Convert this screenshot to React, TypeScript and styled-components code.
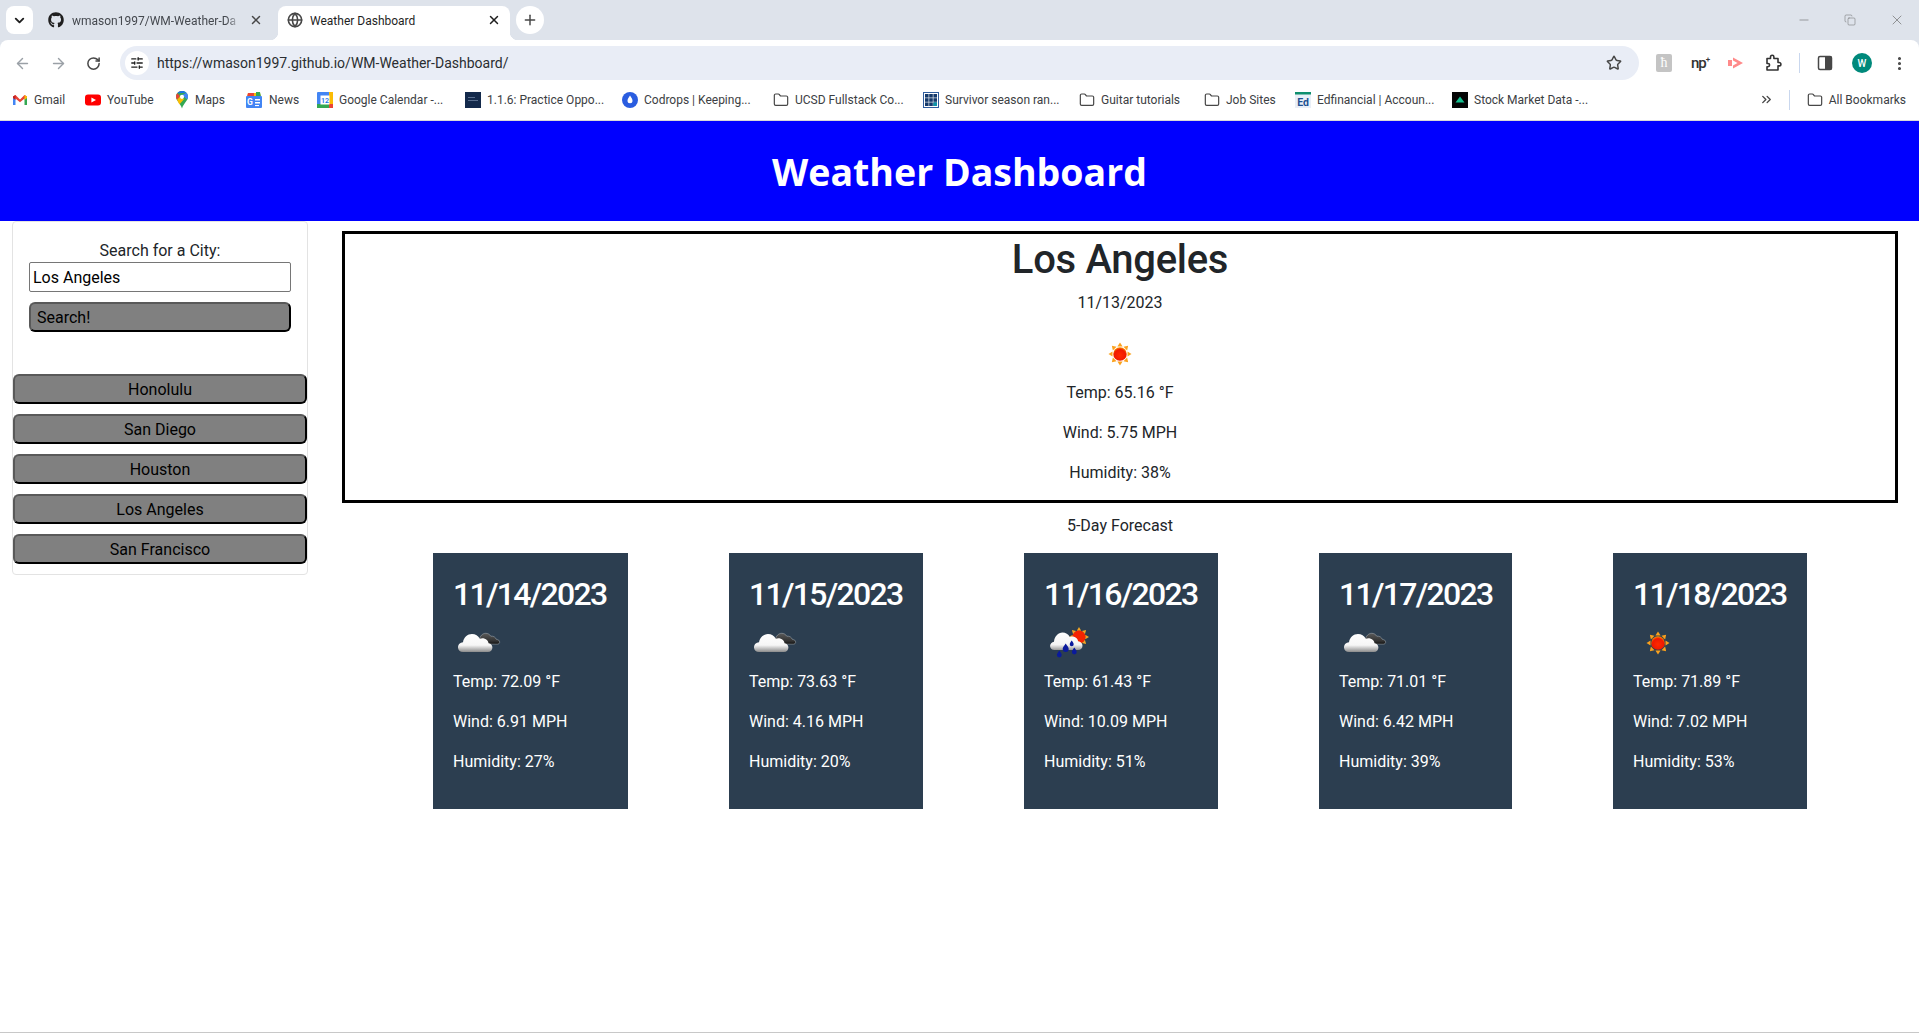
import React from 'react'
import styled, { createGlobalStyle } from 'styled-components'
import { FaGithub } from 'react-icons/fa'
import {
    ArrowLeft,
    ArrowRight,
    ChevronDown,
    ChevronsRight,
    EllipsisVertical,
    Folder,
    Globe,
    Plus,
    RotateCw,
    SlidersHorizontal,
    Star,
    X,
    Minus,
    Copy,
} from 'lucide-react'

const GlobalStyle = createGlobalStyle`
    * { box-sizing: border-box; }
    html, body { margin: 0; padding: 0; background: #fff; }
    body {
        font-family: Roboto, "Open Sans", sans-serif;
        color: #212529;
        overflow: hidden;
    }
`

const SunIcon = () => (
    <svg width="50" height="50" viewBox="0 0 50 50">
        <defs>
            <radialGradient id="sunCore" cx="50%" cy="60%" r="60%">
                <stop offset="0%" stopColor="#ff2a00" />
                <stop offset="70%" stopColor="#f01800" />
                <stop offset="100%" stopColor="#ff9a00" />
            </radialGradient>
        </defs>
        <g fill="#fba11c">
            {[0, 45, 90, 135, 180, 225, 270, 315].map((deg) => (
                <polygon key={deg} points="25,13.5 27.6,17.5 22.4,17.5" transform={`rotate(${deg} 25 25)`} />
            ))}
        </g>
        <circle cx="25" cy="25" r="6.8" fill="url(#sunCore)" />
    </svg>
)

const CloudShape = ({ fill }: { fill: string }) => (
    <path
        d="M5 29.5c0-3 2.2-5 5-5.2.6-4.8 4.6-8.3 9-8.3 3.4 0 6.3 1.9 7.8 4.8 1.1-.6 2.4-.8 3.6-.6 3 .5 4.800 2.600 5.200 5 2.400.4 3.800 2.200 3.800 4.300 0 2.600-1.800 4.500-4.500 4.500H10c-3 0-5-2-5-4.500z"
        fill={fill}
    />
)

const CloudsIcon = ({ id }: { id: string }) => (
    <svg width="50" height="50" viewBox="0 0 50 50">
        <defs>
            <linearGradient id={`${id}White`} x1="0" y1="0" x2="0" y2="1">
                <stop offset="0%" stopColor="#ffffff" />
                <stop offset="62%" stopColor="#f6f6f6" />
                <stop offset="100%" stopColor="#8b8b8b" />
            </linearGradient>
            <linearGradient id={`${id}Dark`} x1="0" y1="0" x2="0" y2="1">
                <stop offset="0%" stopColor="#5a5a5a" />
                <stop offset="70%" stopColor="#333333" />
                <stop offset="100%" stopColor="#111111" />
            </linearGradient>
        </defs>
        <path
            d="M27 26c-1.700-.6-2-3-.6-4.200.4-3.600 3.100-6.500 6.300-6.500 2.300 0 4 1.100 5.100 2.900 2.700-.3 4.700 1 5.600 3.200 1.900.2 3.300 1.100 3.300 2.700 0 1.400-1.100 2.100-2.600 2.100z"
            fill={`url(#${id}Dark)`}
            stroke="#a9b0b6"
            strokeWidth=".5"
        />
        <CloudShape fill={`url(#${id}White)`} />
    </svg>
)

const RainIcon = () => (
    <svg width="50" height="50" viewBox="0 0 50 50">
        <defs>
            <linearGradient id="rainCloud" x1="0" y1="0" x2="0" y2="1">
                <stop offset="0%" stopColor="#ffffff" />
                <stop offset="70%" stopColor="#f4f4f4" />
                <stop offset="100%" stopColor="#9a9a9a" />
            </linearGradient>
        </defs>
        <g fill="#f5a623">
            {[0, 45, 90, 135, 180, 225, 270, 315].map((deg) => (
                <polygon key={deg} points="35,9 37.200,12.800 32.800,12.800" transform={`rotate(${deg} 35 19)`} />
            ))}
        </g>
        <circle cx="35" cy="19" r="6.500" fill="#f52400" />
        <path
            d="M6 28.500c0-2.600 1.800-4.400 4-4.800.4-5.200 4.200-9.200 8.500-9.200 3.200 0 5.800 1.700 7.300 4.500 1.100-.5 2.300-.7 3.500-.4 2.800.5 4.400 2.500 4.800 4.700 2.700.4 4.400 2.200 4.400 4.400 0 2.300-1.700 4.300-4.500 4.300H10.500c-2.800 0-4.500-1.900-4.500-4.500z"
            fill="url(#rainCloud)"
        />
        <g fill="#0a1a9c">
            <path d="M15.300 32.500c1.300 2 2.400 3.200 2.400 4.500a2.400 2.400 0 0 1-4.800 0c0-1.300 1.100-2.500 2.400-4.500z" />
            <path d="M21.700 25.500c1.600 2.400 3 3.900 3 5.600a3 3 0 0 1-6 0c0-1.700 1.400-3.200 3-5.600z" />
            <path d="M27.700 22.500c1 1.600 2 2.600 2 3.800a2 2 0 0 1-4 0c0-1.200 1-2.200 2-3.800z" />
            <path d="M30.300 29.500c1.300 2 2.400 3.200 2.400 4.500a2.400 2.400 0 0 1-4.800 0c0-1.300 1.100-2.500 2.400-4.500z" />
        </g>
    </svg>
)

const GmailIcon = () => (
    <svg width="16" height="16" viewBox="0 0 16 16">
        <path d="M1 4v9h2.500V6.500z" fill="#4285f4" />
        <path d="M15 4v9h-2.500V6.500z" fill="#34a853" />
        <path d="M1 4.500 3.500 3 8 7.500 12.500 3 15 4.500 8 10.200z" fill="#ea4335" />
        <path d="M12.500 3 15 4.500V6l-2.500 1.900z" fill="#fbbc04" />
        <path d="M1 4.500 3.500 3v4.900L1 6z" fill="#c5221f" />
    </svg>
)

const YoutubeIcon = () => (
    <svg width="16" height="16" viewBox="0 0 16 16">
        <rect y="2.500" width="16" height="11" rx="3" fill="#f00" />
        <polygon points="6.400,5.500 11,8 6.400,10.500" fill="#fff" />
    </svg>
)

const MapsIcon = () => (
    <svg width="14" height="18" viewBox="0 0 14 18">
        <path d="M7 0C3.400 0 1 2.500 1 5.800 1 9.500 5.300 12.300 7 17.500 8.700 12.300 13 9.500 13 5.800 13 2.500 10.600 0 7 0z" fill="#34a853" />
        <path d="M2.300 2.300 11.500 1.700C10.300.6 8.800 0 7 0 5 0 3.400.8 2.300 2.300z" fill="#1a73e8" />
        <path d="M1 5.800C1 4.200 1.500 3.200 2.300 2.300L5 5 2 8.800C1.400 7.900 1 7 1 5.800z" fill="#ea4335" />
        <path d="M11.500 1.700C12.400 2.700 13 4 13 5.800c0 1-.3 1.800-.8 2.600L7 4z" fill="#4285f4" />
        <path d="M2 8.800 5.500 5l3.500 3.300-4.700 5.100C3.500 11.700 2.600 10 2 8.800z" fill="#fbbc04" />
        <circle cx="7" cy="5.800" r="2.100" fill="#fff" />
    </svg>
)

const NewsIcon = () => (
    <svg width="18" height="18" viewBox="0 0 18 18">
        <path d="M3 2h12l1 4H2z" fill="#fbbc04" />
        <path d="M3 2h6v4H2z" fill="#ea4335" />
        <path d="M11 1h4l1 5h-5z" fill="#34a853" />
        <rect x="1" y="5" width="16" height="12" rx="1" fill="#4285f4" />
        <text x="5" y="14" fontSize="8.500" fontWeight="700" fill="#fff" textAnchor="middle" fontFamily="Roboto">G</text>
        <rect x="10" y="8" width="5" height="1.500" fill="#fff" />
        <rect x="10" y="11" width="5" height="1.500" fill="#fff" />
        <rect x="10" y="14" width="4" height="1.100" fill="#fff" />
    </svg>
)

const CalendarIcon = () => (
    <svg width="16" height="16" viewBox="0 0 16 16">
        <rect width="16" height="16" rx="1" fill="#4285f4" />
        <rect x="12" y="0" width="4" height="12" fill="#fbbc04" />
        <rect x="0" y="12" width="12" height="4" fill="#34a853" />
        <rect x="12" y="12" width="4" height="4" fill="#ea4335" />
        <rect x="3.500" y="3.500" width="9" height="9" fill="#fff" />
        <text x="8" y="11" fontSize="7" fontWeight="600" fill="#1a73e8" textAnchor="middle" fontFamily="Roboto">12</text>
    </svg>
)

const NavyIcon = () => (
    <svg width="16" height="16" viewBox="0 0 16 16">
        <rect width="16" height="16" fill="#13294b" />
        <rect x="3" y="5" width="7" height="1" fill="#5a6f8f" />
        <rect x="3" y="8" width="10" height="1" fill="#5a6f8f" />
    </svg>
)

const CodropsIcon = () => (
    <svg width="16" height="16" viewBox="0 0 16 16">
        <circle cx="8" cy="8" r="8" fill="#2a5de0" />
        <path d="M8 3.600c1.400 2.200 2.500 3.600 2.500 5.200a2.500 2.500 0 0 1-5 0c0-1.600 1.100-3 2.500-5.200z" fill="#fff" />
    </svg>
)

const GridIcon = () => (
    <svg width="16" height="16" viewBox="0 0 16 16">
        <rect width="16" height="16" fill="#2f5d9e" />
        <rect x="1" y="1" width="14" height="14" fill="#fff" />
        <g fill="#163a6b">
            {[2, 6.200, 10.400].map((y) =>
                [2, 6.200, 10.400].map((x) => <rect key={`${x}-${y}`} x={x} y={y} width="3.600" height="3.600" />),
            )}
        </g>
        <rect x="10.400" y="10.400" width="3.600" height="3.600" fill="#0f94a8" />
    </svg>
)

const EdIcon = () => (
    <svg width="16" height="16" viewBox="0 0 16 16">
        <rect width="16" height="16" fill="#e9eff7" />
        <rect width="16" height="2.500" fill="#0f8f6e" />
        <text x="8" y="14" fontSize="10.500" fontWeight="700" fill="#1d4f91" textAnchor="middle" fontFamily="Roboto">Ed</text>
    </svg>
)

const StockIcon = () => (
    <svg width="16" height="16" viewBox="0 0 16 16">
        <rect width="16" height="16" fill="#050505" />
        <polygon points="8,4.500 12.500,10.500 3.500,10.500" fill="#14c08f" />
    </svg>
)

const SidePanelIcon = () => (
    <svg width="16" height="16" viewBox="0 0 16 16">
        <rect x="1.500" y="1.500" width="13" height="13" rx="1.500" fill="none" stroke="#474747" strokeWidth="1.500" />
        <rect x="8" y="1.500" width="6.500" height="13" fill="#474747" />
    </svg>
)

const ShareIcon = () => (
    <svg width="18" height="16" viewBox="0 0 18 16">
        <rect x="1" y="5" width="4" height="6" fill="#ff8a8a" />
        <path d="M6 2.500 16 8 6 13.500V10.500L10.500 8 6 5.500z" fill="#ff8a8a" />
    </svg>
)

const ExtensionsIcon = () => (
    <svg width="18" height="18" viewBox="0 0 18 18">
        <path
            d="M3 4.500h3.500V3a1.700 1.700 0 0 1 3.400 0v1.500h4.100v4h1.200a1.700 1.700 0 0 1 0 3.400H14v4.100H3v-3.300h1a1.600 1.600 0 0 0 0-3.200H3z"
            fill="none"
            stroke="#333"
            strokeWidth="1.600"
            strokeLinejoin="round"
        />
    </svg>
)

type Bookmark = { label: string; width: number; icon: React.ReactNode }

const folder = <Folder size={16} color="#474747" strokeWidth={1.8} />

const bookmarks: Bookmark[] = [
    { label: 'Gmail', width: 73, icon: <GmailIcon /> },
    { label: 'YouTube', width: 90, icon: <YoutubeIcon /> },
    { label: 'Maps', width: 70, icon: <MapsIcon /> },
    { label: 'News', width: 72, icon: <NewsIcon /> },
    { label: 'Google Calendar -...', width: 148, icon: <CalendarIcon /> },
    { label: '1.1.6: Practice Oppo...', width: 157, icon: <NavyIcon /> },
    { label: 'Codrops | Keeping...', width: 151, icon: <CodropsIcon /> },
    { label: 'UCSD Fullstack Co...', width: 150, icon: folder },
    { label: 'Survivor season ran...', width: 156, icon: <GridIcon /> },
    { label: 'Guitar tutorials', width: 125, icon: folder },
    { label: 'Job Sites', width: 91, icon: folder },
    { label: 'Edfinancial | Accoun...', width: 157, icon: <EdIcon /> },
    { label: 'Stock Market Data -...', width: 160, icon: <StockIcon /> },
]

const savedCities = ['Honolulu', 'San Diego', 'Houston', 'Los Angeles', 'San Francisco']

const forecast = [
    { date: '11/14/2023', temp: '72.09', wind: '6.91', humidity: '27', icon: <CloudsIcon id="dayOne" /> },
    { date: '11/15/2023', temp: '73.63', wind: '4.16', humidity: '20', icon: <CloudsIcon id="dayTwo" /> },
    { date: '11/16/2023', temp: '61.43', wind: '10.09', humidity: '51', icon: <RainIcon /> },
    { date: '11/17/2023', temp: '71.01', wind: '6.42', humidity: '39', icon: <CloudsIcon id="dayFour" /> },
    { date: '11/18/2023', temp: '71.89', wind: '7.02', humidity: '53', icon: <SunIcon /> },
]

const App = () => {
    return (
        <Page>
            <GlobalStyle />
            <BrowserChrome>
                <TabStrip>
                    <TabSearch>
                        <ChevronDown size={15} strokeWidth={3} color="#1f1f1f" />
                    </TabSearch>
                    <BackgroundTab>
                        <FaGithub size={16} color="#1f1f1f" />
                        <TabTitle $muted>wmason1997/WM-Weather-Da</TabTitle>
                        <X size={14} strokeWidth={2.5} color="#474747" />
                    </BackgroundTab>
                    <ActiveTab>
                        <Globe size={16} color="#474747" strokeWidth={2.4} />
                        <TabTitle>Weather Dashboard</TabTitle>
                        <X size={14} strokeWidth={2.5} color="#1f1f1f" />
                    </ActiveTab>
                    <NewTab>
                        <Plus size={16} strokeWidth={2.2} color="#474747" />
                    </NewTab>
                    <WindowControls>
                        <Minus size={14} strokeWidth={1} color="#666" />
                        <Copy size={12} strokeWidth={1} color="#666" />
                        <X size={16} strokeWidth={1} color="#666" />
                    </WindowControls>
                </TabStrip>
                <Toolbar>
                    <NavButtons>
                        <ArrowLeft size={17} color="#9aa0a6" strokeWidth={2} />
                        <ArrowRight size={17} color="#9aa0a6" strokeWidth={2} />
                        <RotateCw size={15} color="#474747" strokeWidth={2.4} />
                    </NavButtons>
                    <AddressBar>
                        <SiteInfo>
                            <SlidersHorizontal size={14} color="#1f1f1f" strokeWidth={2.2} />
                        </SiteInfo>
                        <Url>https://wmason1997.github.io/WM-Weather-Dashboard/</Url>
                        <Star size={16} color="#474747" strokeWidth={2.2} />
                    </AddressBar>
                    <Extensions>
                        <ExtensionBadge>ħ</ExtensionBadge>
                        <NpMark>
                            np<sup>+</sup>
                        </NpMark>
                        <ShareIcon />
                        <ExtensionsIcon />
                        <ExtensionsDivider />
                        <SidePanelIcon />
                        <Avatar>W</Avatar>
                        <EllipsisVertical size={17} color="#474747" strokeWidth={2.4} />
                    </Extensions>
                </Toolbar>
                <BookmarksBar>
                    {bookmarks.map((b) => (
                        <BookmarkItem key={b.label} $width={b.width}>
                            {b.icon}
                            <span>{b.label}</span>
                        </BookmarkItem>
                    ))}
                    <BookmarksEnd>
                        <ChevronsRight size={15} color="#474747" strokeWidth={2.2} />
                        <BookmarksDivider />
                        <BookmarkItem>
                            {folder}
                            <span>All Bookmarks</span>
                        </BookmarkItem>
                    </BookmarksEnd>
                </BookmarksBar>
            </BrowserChrome>

            <Header>
                <h1>Weather Dashboard</h1>
            </Header>

            <Main>
                <Sidebar>
                    <SearchForm>
                        <SearchLabel htmlFor="city">Search for a City:</SearchLabel>
                        <CityInput id="city" type="text" defaultValue="Los Angeles" />
                        <SearchButton type="button">Search!</SearchButton>
                    </SearchForm>
                    <CityList>
                        {savedCities.map((city) => (
                            <CityButton key={city} type="button">
                                {city}
                            </CityButton>
                        ))}
                    </CityList>
                </Sidebar>

                <Content>
                    <CurrentWeather>
                        <CityName>Los Angeles</CityName>
                        <Line>11/13/2023</Line>
                        <IconSlot>
                            <SunIcon />
                        </IconSlot>
                        <Line>Temp: 65.16 °F</Line>
                        <Line>Wind: 5.75 MPH</Line>
                        <Line>Humidity: 38%</Line>
                    </CurrentWeather>
                    <ForecastTitle>5-Day Forecast</ForecastTitle>
                    <ForecastRow>
                        {forecast.map((day) => (
                            <ForecastCard key={day.date}>
                                <ForecastDate>{day.date}</ForecastDate>
                                <IconSlot $left>{day.icon}</IconSlot>
                                <Line>Temp: {day.temp} °F</Line>
                                <Line>Wind: {day.wind} MPH</Line>
                                <Line>Humidity: {day.humidity}%</Line>
                            </ForecastCard>
                        ))}
                    </ForecastRow>
                </Content>
            </Main>
        </Page>
    )
}

export default App

const Page = styled.div`
    display: flex;
    flex-direction: column;
    height: 1033px;
    border-bottom: 1px solid #c8c8c8;
`
const BrowserChrome = styled.div`
    flex: none;
    background: #dee3eb;
    font-size: 12px;
    color: #3c4043;
`
const TabStrip = styled.div`
    display: flex;
    align-items: flex-start;
    height: 40px;
    padding: 6px 0 0 6px;
`
const TabSearch = styled.div`
    display: flex;
    align-items: center;
    justify-content: center;
    width: 27px;
    height: 28px;
    background: #fff;
    border-radius: 8px;
`
const BackgroundTab = styled.div`
    display: flex;
    align-items: center;
    width: 245px;
    height: 28px;
    padding: 0 15px 0 15px;
    gap: 8px;
`
const ActiveTab = styled.div`
    position: relative;
    display: flex;
    align-items: center;
    width: 232px;
    height: 34px;
    padding: 0 9px 6px 9px;
    gap: 7px;
    background: #fff;
    border-radius: 8px 8px 0 0;
    &::before,
    &::after {
        content: '';
        position: absolute;
        bottom: 0;
        width: 8px;
        height: 8px;
    }
    &::before {
        left: -8px;
        background: radial-gradient(circle at 0 0, transparent 8px, #fff 8.500px);
    }
    &::after {
        right: -8px;
        background: radial-gradient(circle at 100% 0, transparent 8px, #fff 8.500px);
    }
`
const TabTitle = styled.span<{ $muted?: boolean }>`
    flex: 1;
    padding-top: 2px;
    overflow: hidden;
    white-space: nowrap;
    color: ${(p) => (p.$muted ? '#45494f' : '#1f1f1f')};
    ${(p) => p.$muted && 'mask-image: linear-gradient(to right, #000 calc(100% - 14px), transparent);'}
`
const NewTab = styled.div`
    display: flex;
    align-items: center;
    justify-content: center;
    width: 28px;
    height: 28px;
    margin-left: 6px;
    background: #fff;
    border-radius: 50%;
`
const WindowControls = styled.div`
    display: flex;
    align-items: center;
    gap: 33px;
    height: 28px;
    margin-left: auto;
    padding-right: 14px;
`
const Toolbar = styled.div`
    display: flex;
    align-items: center;
    height: 40px;
    background: #fff;
    border-radius: 8px 8px 0 0;
    padding: 6px 0 0 14px;
`
const NavButtons = styled.div`
    display: flex;
    align-items: center;
    gap: 19px;
    width: 106px;
`
const AddressBar = styled.div`
    display: flex;
    align-items: center;
    width: 1519px;
    height: 34px;
    padding: 0 17px 0 5px;
    background: #e9edf6;
    border-radius: 17px;
`
const SiteInfo = styled.div`
    display: flex;
    align-items: center;
    justify-content: center;
    width: 24px;
    height: 24px;
    background: #fff;
    border-radius: 50%;
`
const Url = styled.div`
    flex: 1;
    margin-left: 8px;
    font-size: 14px;
    color: #2a2d31;
`
const Extensions = styled.div`
    display: flex;
    align-items: center;
    gap: 19px;
    margin-left: 17px;
`
const ExtensionBadge = styled.div`
    display: flex;
    align-items: center;
    justify-content: center;
    width: 16px;
    height: 18px;
    background: #c4c4c4;
    border-radius: 2px;
    color: #fff;
    font-family: "Liberation Serif", serif;
    font-size: 14px;
`
const NpMark = styled.div`
    width: 17px;
    color: #333;
    font-size: 15px;
    font-weight: 500;
    letter-spacing: -1px;
    sup {
        font-size: 8px;
        line-height: 0;
    }
`
const ToolbarDivider = styled.div`
    width: 1px;
    height: 20px;
    background: #c9d7ee;
`
const ExtensionsDivider = styled(ToolbarDivider)`
    margin: 0 -2px;
`
const BookmarksDivider = styled(ToolbarDivider)`
    margin-right: 2px;
`
const Avatar = styled.div`
    display: flex;
    align-items: center;
    justify-content: center;
    width: 20px;
    height: 20px;
    background: #00897b;
    border-radius: 50%;
    color: #fff;
    font-size: 10px;
    font-weight: 500;
`
const BookmarksBar = styled.div`
    display: flex;
    align-items: center;
    height: 41px;
    padding: 0 0 1px 12px;
    background: #fff;
    border-bottom: 1px solid #d9d9d9;
`
const BookmarkItem = styled.div<{ $width?: number }>`
    display: flex;
    align-items: center;
    flex: none;
    gap: 6px;
    width: ${(p) => (p.$width ? `${p.$width}px` : 'auto')};
    white-space: nowrap;
    font-size: 12px;
    color: #3c4043;
    span {
        padding-top: 1px;
    }
`
const BookmarksEnd = styled.div`
    display: flex;
    align-items: center;
    gap: 15px;
    margin-left: auto;
    padding-right: 13px;
`
const Header = styled.header`
    display: flex;
    align-items: center;
    justify-content: center;
    flex: none;
    height: 100px;
    padding-top: 2px;
    background: #0000ff;
    h1 {
        margin: 0;
        color: #fff;
        font-family: "Open Sans", sans-serif;
        font-size: 37.500px;
        font-weight: 700;
        line-height: 48px;
    }
`
const Main = styled.main`
    display: flex;
    align-items: flex-start;
    padding: 0 21px 0 12px;
    font-size: 16px;
    line-height: 24px;
`
const Sidebar = styled.aside`
    flex: none;
    width: 296px;
    height: 354px;
    border: 1px solid #e3e3e3;
    border-radius: 4px;
`
const SearchForm = styled.form`
    display: flex;
    flex-direction: column;
    padding: 16px 16px 0;
`
const SearchLabel = styled.label`
    padding-top: 1px;
    line-height: 23px;
    text-align: center;
`
const CityInput = styled.input`
    height: 30px;
    padding: 1px 3px 0;
    border: 1px solid #767676;
    border-radius: 2px;
    font: inherit;
    color: #000;
`
const GreyButton = styled.button`
    height: 30px;
    padding: 2px 0 0;
    background: #808080;
    border: 2px outset #000;
    border-color: #595959 #000 #000 #595959;
    border-radius: 6px;
    font: inherit;
    color: #000;
`
const SearchButton = styled(GreyButton)`
    margin-top: 10px;
    padding-left: 6px;
    text-align: left;
`
const CityList = styled.div`
    display: flex;
    flex-direction: column;
    gap: 10px;
    margin-top: 42px;
`
const CityButton = styled(GreyButton)`
    text-align: center;
`
const Content = styled.section`
    flex: 1;
    margin-left: 34px;
    padding-top: 10px;
    text-align: center;
`
const CurrentWeather = styled.div`
    border: 3px solid #000;
`
const CityName = styled.h2`
    margin: 0 0 8px;
    padding-top: 4px;
    font-size: 40px;
    font-weight: 500;
    line-height: 44px;
    letter-spacing: -0.3px;
`
const Line = styled.p`
    margin: 0 0 16px;
    padding-top: 1px;
    line-height: 23px;
`
const IconSlot = styled.div<{ $left?: boolean }>`
    display: flex;
    justify-content: ${(p) => (p.$left ? 'flex-start' : 'center')};
    height: 50px;
    svg {
        margin-top: -1px;
    }
`
const ForecastTitle = styled.div`
    margin: 10px 0 16px;
    padding-top: 1px;
    line-height: 23px;
`
const ForecastRow = styled.div`
    display: flex;
    padding-left: 91px;
    gap: 101px;
`
const ForecastCard = styled.div`
    width: 194px;
    height: 256px;
    padding: 20px 20px 0;
    background: #2c3e50;
    color: #fff;
    text-align: left;
    white-space: nowrap;
    &:first-child {
        width: 195px;
    }
    &:nth-child(4) {
        width: 193px;
    }
`
const ForecastDate = styled.h3`
    margin: 0 0 8px;
    padding-top: 4px;
    font-size: 32px;
    font-weight: 500;
    line-height: 34px;
    letter-spacing: -1.7px;
`
